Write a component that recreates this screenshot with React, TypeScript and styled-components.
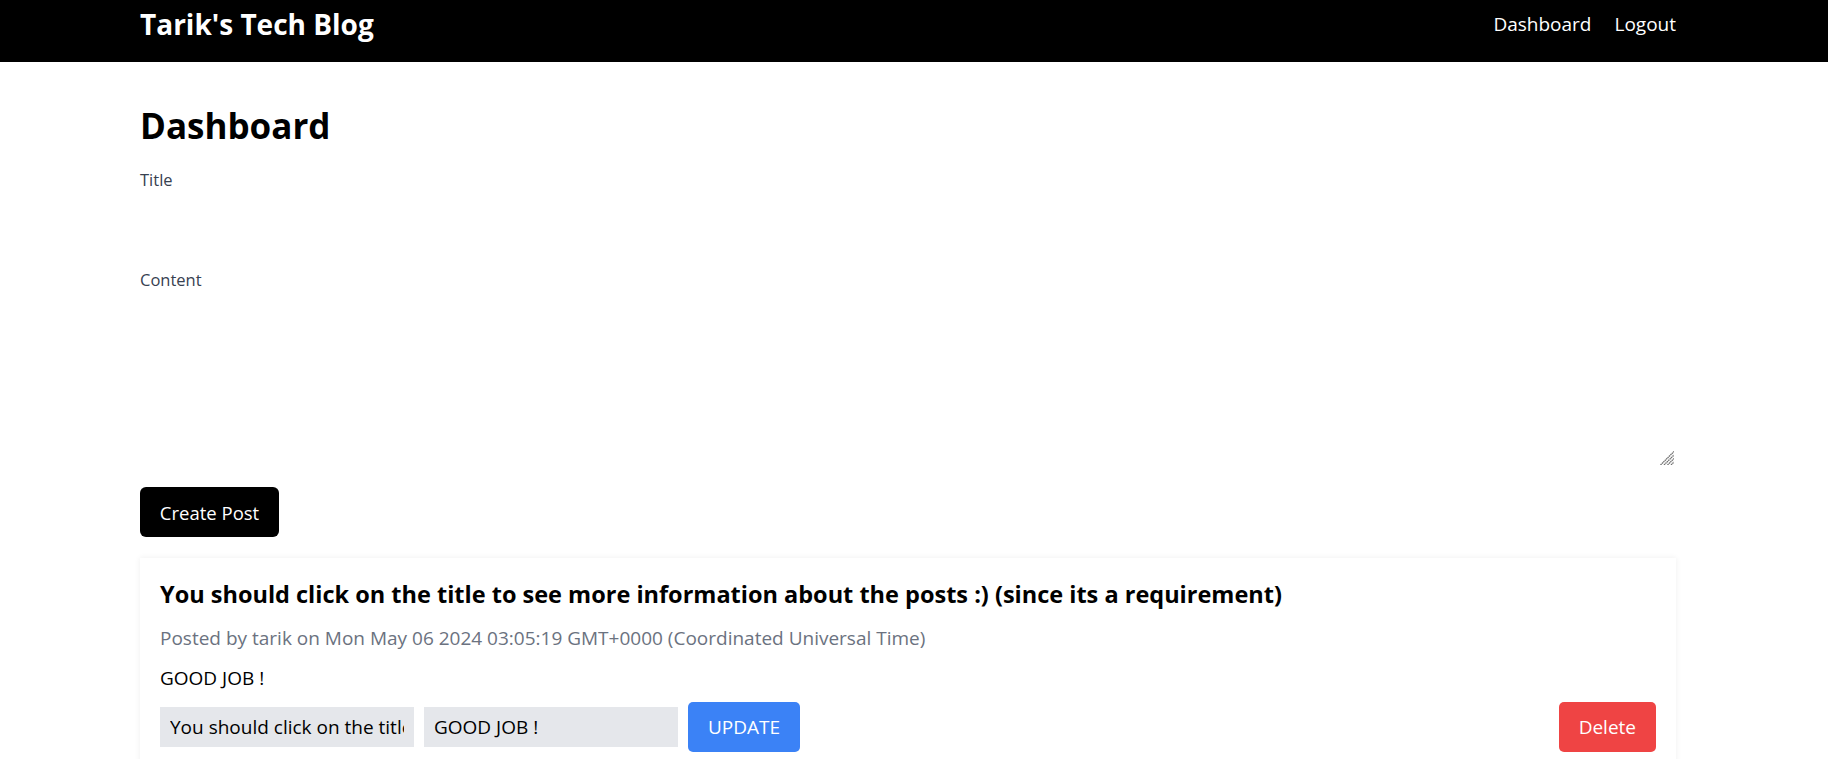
import React from "react";
import styled, { createGlobalStyle } from "styled-components";

const GlobalStyle = createGlobalStyle`
  body {
    margin: 0;
    background: #ffffff;
    font-family: "Open Sans", "Noto Sans", sans-serif;
    color: #000000;
  }
  * { box-sizing: border-box; }
`

const Header = styled.header`
  background: #000000;
  height: 62px;
  padding-bottom: 14px;
`

const Container = styled.div`
  width: 1536px;
  margin-left: 140px;
`

const HeaderRow = styled(Container)`
  height: 48px;
  display: flex;
  align-items: center;
  justify-content: space-between;
`

const Brand = styled.a`
  color: #ffffff;
  font-size: 28px;
  line-height: 36px;
  font-weight: 700;
  text-decoration: none;
`

const NavLinks = styled.nav`
  display: flex;
  gap: 23px;
`

const NavLink = styled.a`
  color: #ffffff;
  font-size: 19px;
  line-height: 28px;
  text-decoration: none;
`

const Main = styled(Container)`
  padding-top: 44px;
`

const PageTitle = styled.h1`
  margin: 0 0 20px;
  font-size: 35px;
  line-height: 40px;
  font-weight: 700;
`

const Form = styled.form`
  display: flex;
  flex-direction: column;
  align-items: flex-start;
`

const Label = styled.label`
  font-size: 16.5px;
  line-height: 28px;
  color: #374151;
`

const TitleInput = styled.input`
  width: 100%;
  height: 44px;
  margin: 0 0 28px;
  border: none;
  outline: none;
  background: transparent;
  font: inherit;
`

const AreaWrap = styled.div`
  position: relative;
  width: 100%;
  margin-top: 4px;
`

const ContentArea = styled.textarea`
  display: block;
  width: 100%;
  height: 169px;
  border: none;
  outline: none;
  background: transparent;
  font: inherit;
  resize: none;
`

// stands in for the browser's textarea resize grip
const Grip = styled.svg`
  position: absolute;
  right: 2px;
  bottom: 2px;
  width: 14px;
  height: 14px;
  pointer-events: none;
`

const CreateButton = styled.button`
  margin-top: 20px;
  width: 139px;
  height: 50px;
  border: none;
  border-radius: 6px;
  background: #000000;
  color: #ffffff;
  font-family: inherit;
  font-size: 18.5px;
  cursor: pointer;
`

const PostCard = styled.article`
  margin-top: 21px;
  padding: 20px;
  background: #ffffff;
  box-shadow: 0 0 6px rgba(0, 0, 0, 0.07);
`

const PostTitle = styled.h2`
  margin: 0 0 14px;
  font-size: 23.5px;
  line-height: 32px;
  font-weight: 700;
  cursor: pointer;
`

const PostMeta = styled.p`
  margin: 0 0 12px;
  font-size: 19px;
  line-height: 28px;
  color: #6b7280;
`

const PostBody = styled.p`
  margin: 0 0 10px;
  font-size: 19px;
  line-height: 28px;
`

const Actions = styled.div`
  display: flex;
  align-items: center;
  gap: 10px;
`

const EditField = styled.input`
  width: 254px;
  height: 40px;
  padding: 0 10px;
  border: none;
  outline: none;
  background: #e5e7eb;
  font-family: inherit;
  font-size: 19px;
  color: #000000;
`

const ActionButton = styled.button<{ $tone: "blue" | "red"; $push?: boolean }>`
  height: 50px;
  padding: 0 20px;
  border: none;
  border-radius: 5px;
  background: ${(p) => (p.$tone === "blue" ? "#3b82f6" : "#ef4444")};
  color: #ffffff;
  font-family: inherit;
  font-size: 19px;
  margin-left: ${(p) => (p.$push ? "auto" : "0")};
  cursor: pointer;
`

const post = {
  title: "You should click on the title to see more information about the posts :) (since its a requirement)",
  author: "tarik",
  date: "Mon May 06 2024 03:05:19 GMT+0000 (Coordinated Universal Time)",
  content: "GOOD JOB !",
};

const App: React.FC = () => {
  return (
    <>
      <GlobalStyle />
      <Header>
        <HeaderRow>
          <Brand href="#">Tarik's Tech Blog</Brand>
          <NavLinks>
            <NavLink href="#">Dashboard</NavLink>
            <NavLink href="#">Logout</NavLink>
          </NavLinks>
        </HeaderRow>
      </Header>
      <Main>
        <PageTitle>Dashboard</PageTitle>
        <Form onSubmit={(e) => e.preventDefault()}>
          <Label htmlFor="title">Title</Label>
          <TitleInput id="title" />
          <Label htmlFor="content">Content</Label>
          <AreaWrap>
            <ContentArea id="content" />
            <Grip viewBox="0 0 14 14">
              <g stroke="#707070" strokeWidth="1.3" strokeDasharray="1.5 0.5">
                <line x1="0.5" y1="14" x2="14" y2="0.5" />
                <line x1="4" y1="14" x2="14" y2="4" />
                <line x1="7.5" y1="14" x2="14" y2="7.5" />
                <line x1="11" y1="14" x2="14" y2="11" />
              </g>
            </Grip>
          </AreaWrap>
          <CreateButton type="submit">Create Post</CreateButton>
        </Form>
        <PostCard>
          <PostTitle>{post.title}</PostTitle>
          <PostMeta>Posted by {post.author} on {post.date}</PostMeta>
          <PostBody>{post.content}</PostBody>
          <Actions>
            <EditField defaultValue={post.title} />
            <EditField defaultValue={post.content} />
            <ActionButton $tone="blue">UPDATE</ActionButton>
            <ActionButton $tone="red" $push>Delete</ActionButton>
          </Actions>
        </PostCard>
      </Main>
    </>
  );
};

export default App;
